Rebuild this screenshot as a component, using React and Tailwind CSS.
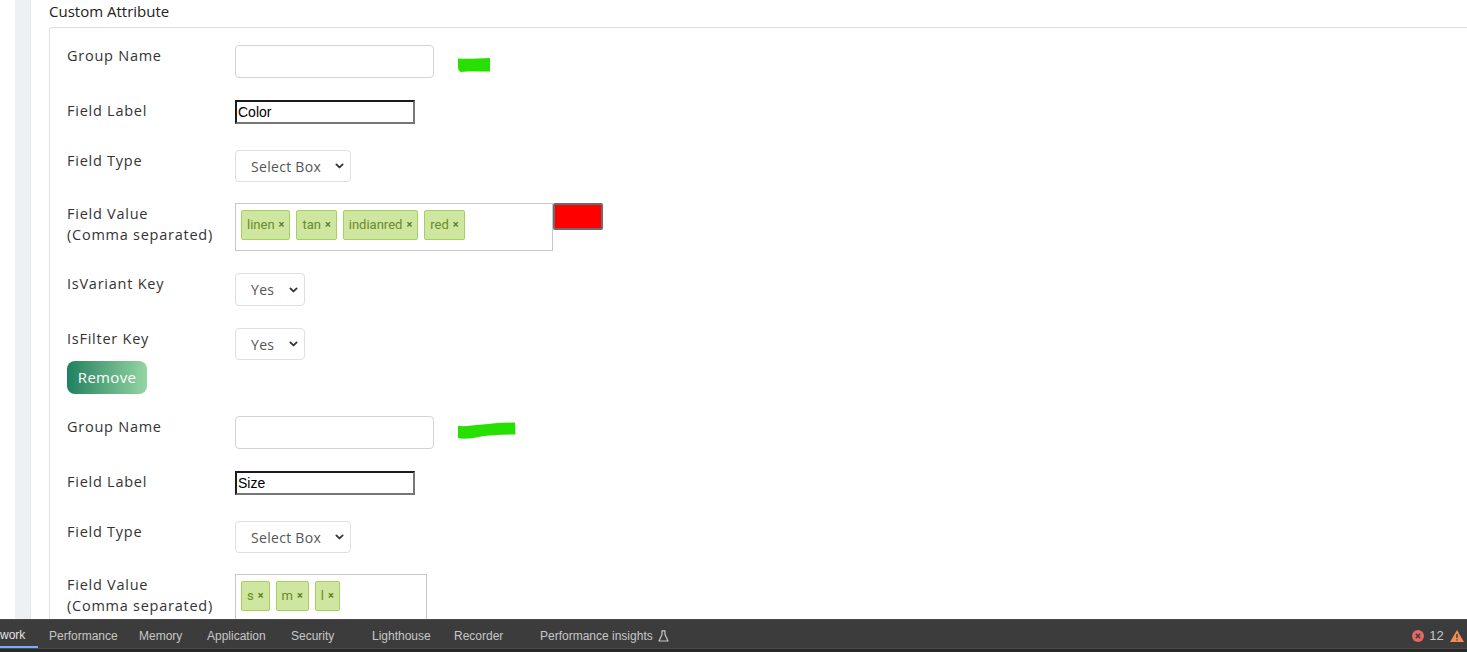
import React from 'react';

const labelFont = "font-['Open_Sans',sans-serif]";

function Chevron({ className }) {
  return (
    <svg viewBox="0 0 10 6" className={className} fill="none" stroke="#333" strokeWidth="2" strokeLinecap="round" strokeLinejoin="round">
      <path d="M1.5 1.2 L5 4.6 L8.5 1.2" />
    </svg>
  );
}

function SelectBox({ value, width, height }) {
  return (
    <div className={`relative flex items-center ${width} ${height} rounded-[4px] border border-[#dcdfe3] bg-white pl-[15px] text-[14px] tracking-[0.3px] text-[#555]`}>
      <span>{value}</span>
      <Chevron className="absolute right-[6px] top-1/2 -translate-y-1/2 w-[9px] h-[6px]" />
    </div>
  );
}

function Chip({ text }) {
  return (
    <span className="flex items-center h-[30px] px-[5px] gap-[4px] rounded-[2px] border border-[#a6d15e] bg-[#cfe6a0] text-[13px] text-[#6a8a28] font-['Roboto',sans-serif]">
      {text}
      <span className="text-[11px] font-bold text-[#5f7d24]">×</span>
    </span>
  );
}

function Row({ label, children, mb }) {
  return (
    <div className={`flex items-start ${mb}`}>
      <div className="w-[168px] shrink-0 text-[14.5px] tracking-[0.75px] leading-[21px] text-[#333]">{label}</div>
      {children}
    </div>
  );
}

function Scribble({ variant }) {
  if (variant === 1) {
    return (
      <svg width="34" height="17" viewBox="0 0 34 17" className="ml-[23px] mt-[11px] shrink-0">
        <path d="M1 2.5 C 10 3.5, 22 2, 33 2 L33 15.5 C 24 15.8, 14 14.5, 4 16 C 1.5 15.5, 1 13, 1 10 Z" fill="#27e000" />
      </svg>
    );
  }
  return (
    <svg width="58" height="18" viewBox="0 0 58 18" className="ml-[24px] mt-[6px] shrink-0">
      <path d="M0 4 C 14 5, 28 1, 57 0.5 L57.5 12.5 C 44 12.5, 30 13, 18 15.5 C 10 17, 4 17, 0 16 Z" fill="#27e000" />
    </svg>
  );
}

function AttributeGroup({ fieldLabel, values, boxWidth, scribble, swatch, tail }) {
  return (
    <div>
      <Row label="Group Name" mb="mb-[22px]">
        <div className="w-[199px] h-[33px] rounded-[4px] border border-[#ced4da] bg-white" />
        <Scribble variant={scribble} />
      </Row>
      <Row label="Field Label" mb="mb-[26px]">
        <div className="w-[180px] h-[24px] border-2 border-[#767676] border-t-[#1b1b1b] border-l-[#1b1b1b] bg-white flex items-center pl-[1px] text-[14px] text-black font-['Liberation_Sans',Arial,sans-serif]">
          {fieldLabel}
        </div>
      </Row>
      <Row label="Field Type" mb="mb-[21px]">
        <SelectBox value="Select Box" width="w-[116px]" height="h-[32px]" />
      </Row>
      <Row label={<>Field Value<br />(Comma separated)</>} mb="mb-[22px]">
        <div className={`${boxWidth} h-[48px] border border-[#c8c8c8] bg-white pt-[6px] pl-[5px] flex gap-[6px] items-start`}>
          {values.map(v => <Chip key={v} text={v} />)}
        </div>
        {swatch && <div className="w-[50px] h-[27px] border-2 border-[#6b6b6b] rounded-[2px] bg-[#ff0000] shrink-0" />}
      </Row>
      {tail && (
        <>
          <Row label="IsVariant Key" mb="mb-[22px]">
            <SelectBox value="Yes" width="w-[70px]" height="h-[33px]" />
          </Row>
          <Row label="IsFilter Key" mb="mb-[1px]">
            <SelectBox value="Yes" width="w-[70px]" height="h-[32px]" />
          </Row>
          <button className="w-[80px] h-[33px] mb-[22px] rounded-[8px] bg-gradient-to-r from-[#1b8160] to-[#93d6a3] text-white text-[15px] tracking-[0.3px] font-medium">
            Remove
          </button>
        </>
      )}
    </div>
  );
}

const tabs = [
  { name: 'Performance', w: 'w-[90px]' },
  { name: 'Memory', w: 'w-[68px]' },
  { name: 'Application', w: 'w-[84px]' },
  { name: 'Security', w: 'w-[81px]' },
  { name: 'Lighthouse', w: 'w-[82px]' },
  { name: 'Recorder', w: 'w-[86px]' },
];

function DevtoolsBar() {
  return (
    <div className="shrink-0 border-t border-[#4b4b4b] bg-[#3c3c3c] font-['Liberation_Sans',Arial,sans-serif] text-[12px] text-[#c7c7c7]">
      <div className="flex items-stretch h-[28px] pt-[3px] overflow-hidden">
        <div className="w-[38px] shrink-0 flex items-center border-b-2 border-[#7cacf8] text-[#e3e3e3]">work</div>
        {tabs.map(t => (
          <div key={t.name} className={`${t.w} shrink-0 flex items-center pl-[11px]`}>{t.name}</div>
        ))}
        <div className="shrink-0 flex items-center pl-[11px] gap-[5px]">
          Performance insights
          <svg width="11" height="12" viewBox="0 0 11 12" fill="none" stroke="#c7c7c7" strokeWidth="1.2">
            <path d="M3.5 0.8 H7.5 M4 0.8 V4.5 L1 11 H10 L7 4.5 V0.8" strokeLinejoin="round" />
          </svg>
        </div>
        <div className="ml-auto mr-[-9px] flex items-center gap-[5px]">
          <svg width="12" height="12" viewBox="0 0 12 12">
            <circle cx="6" cy="6" r="6" fill="#e46962" />
            <path d="M3.8 3.8 L8.2 8.2 M8.2 3.8 L3.8 8.2" stroke="#3c3c3c" strokeWidth="1.4" />
          </svg>
          <span className="text-[13px] text-[#c7c7c7]">12</span>
          <svg width="14" height="12" viewBox="0 0 14 12" className="ml-[1px]">
            <path d="M7 0 L14 12 H0 Z" fill="#f28b54" />
            <path d="M7 4 V8 M7 9.3 V10.5" stroke="#3c3c3c" strokeWidth="1.4" />
          </svg>
          <span className="text-[13px] text-[#c7c7c7]">1</span>
        </div>
      </div>
      <div className="h-[4px] bg-[#292929] border-t border-[#4a4a4a]" />
    </div>
  );
}

export default function App() {
  return (
    <div className="h-[652px] w-full flex flex-col bg-white overflow-hidden">
      <div className="flex-1 flex min-h-0 overflow-hidden">
        <div className="w-[15px] shrink-0" />
        <div className="w-[16px] shrink-0 bg-[#eef1f3] border-r border-[#e3e6e8]" />
        <div className={`flex-1 min-w-0 pl-[18px] ${labelFont}`}>
          <h3 className="text-[15px] leading-[22px] font-medium text-[#222] mb-[5px]">Custom Attribute</h3>
          <div className="border-l border-t border-[#dee2e6] rounded-tl-[4px] pl-[17px] pt-[17px] h-[700px]">
            <AttributeGroup fieldLabel="Color" values={['linen', 'tan', 'indianred', 'red']} boxWidth="w-[318px]" scribble={1} swatch tail />
            <AttributeGroup fieldLabel="Size" values={['s', 'm', 'l']} boxWidth="w-[192px]" scribble={2} />
          </div>
        </div>
      </div>
      <DevtoolsBar />
    </div>
  );
}
